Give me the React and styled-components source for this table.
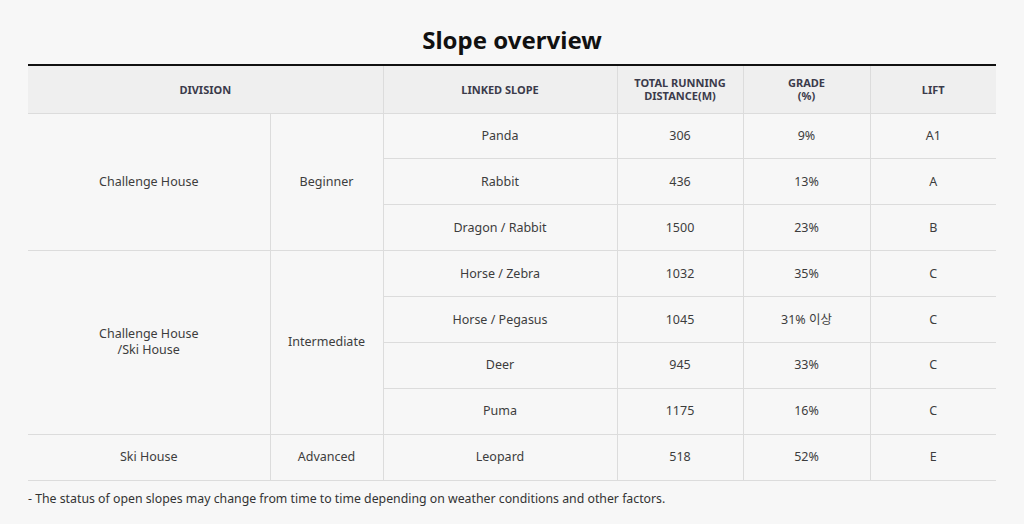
import React from 'react'
import styled, { createGlobalStyle } from 'styled-components'

const GlobalStyle = createGlobalStyle`
  html, body {
    margin: 0;
    padding: 0;
    background: #f7f7f7;
  }
  body {
    font-family: 'Noto Sans', 'Noto Sans CJK KR', sans-serif;
    color: #333;
  }
`

const Page = styled.div`
  padding: 24px 28px 0 28px;
  display: flex;
  flex-direction: column;
`

const Title = styled.h2`
  margin: 0 0 8px 0;
  text-align: center;
  font-size: 24px;
  line-height: 32px;
  font-weight: 700;
  color: #111;
`

const Table = styled.table`
  width: 968px;
  border-collapse: collapse;
  table-layout: fixed;
  border-top: 2px solid #111;
`

const HeadCell = styled.th`
  background: #efefef;
  height: 48px;
  padding: 0 6px;
  font-size: 11px;
  line-height: 13px;
  font-weight: 700;
  color: #3b3b4b;
  text-transform: uppercase;
  text-align: center;
  vertical-align: middle;
  border-left: ${p => (p.$first ? 'none' : '1px solid #dcdcdc')};
  box-sizing: border-box;
`

const Row = styled.tr`
  height: 45.9px;
`

const Cell = styled.td`
  padding: 0 6px;
  font-size: 12.5px;
  line-height: 16px;
  color: #3d3d3d;
  text-align: center;
  vertical-align: middle;
  border-top: 1px solid #dcdcdc;
  border-bottom: 1px solid #dcdcdc;
  border-left: ${p => (p.$first ? 'none' : '1px solid #dcdcdc')};
`

const Note = styled.p`
  margin: 10px 0 0 0;
  font-size: 12.3px;
  line-height: 16px;
  color: #333;
`

const groups = [
  {
    division: ['Challenge House'],
    level: 'Beginner',
    slopes: [
      ['Panda', '306', '9%', 'A1'],
      ['Rabbit', '436', '13%', 'A'],
      ['Dragon / Rabbit', '1500', '23%', 'B'],
    ],
  },
  {
    division: ['Challenge House', '/Ski House'],
    level: 'Intermediate',
    slopes: [
      ['Horse / Zebra', '1032', '35%', 'C'],
      ['Horse / Pegasus', '1045', '31% 이상', 'C'],
      ['Deer', '945', '33%', 'C'],
      ['Puma', '1175', '16%', 'C'],
    ],
  },
  {
    division: ['Ski House'],
    level: 'Advanced',
    slopes: [['Leopard', '518', '52%', 'E']],
  },
]

const App = () => {
  return (
    <Page>
      <GlobalStyle />
      <Title>Slope overview</Title>
      <Table>
        <colgroup>
          <col style={{ width: 242 }} />
          <col style={{ width: 113 }} />
          <col style={{ width: 234 }} />
          <col style={{ width: 126 }} />
          <col style={{ width: 127 }} />
          <col style={{ width: 126 }} />
        </colgroup>
        <thead>
          <tr>
            <HeadCell colSpan={2} $first>Division</HeadCell>
            <HeadCell>Linked slope</HeadCell>
            <HeadCell>
              Total running
              <br />
              distance(m)
            </HeadCell>
            <HeadCell>
              Grade
              <br />
              (%)
            </HeadCell>
            <HeadCell>Lift</HeadCell>
          </tr>
        </thead>
        <tbody>
          {groups.map(group =>
            group.slopes.map((slope, i) => (
              <Row key={group.level + slope[0]}>
                {i === 0 && (
                  <>
                    <Cell rowSpan={group.slopes.length} $first>
                      {group.division.map(line => (
                        <div key={line}>{line}</div>
                      ))}
                    </Cell>
                    <Cell rowSpan={group.slopes.length}>{group.level}</Cell>
                  </>
                )}
                {slope.map((value, j) => (
                  <Cell key={j}>{value}</Cell>
                ))}
              </Row>
            ))
          )}
        </tbody>
      </Table>
      <Note>
        - The status of open slopes may change from time to time depending on weather conditions and other factors.
      </Note>
    </Page>
  )
}

export default App
